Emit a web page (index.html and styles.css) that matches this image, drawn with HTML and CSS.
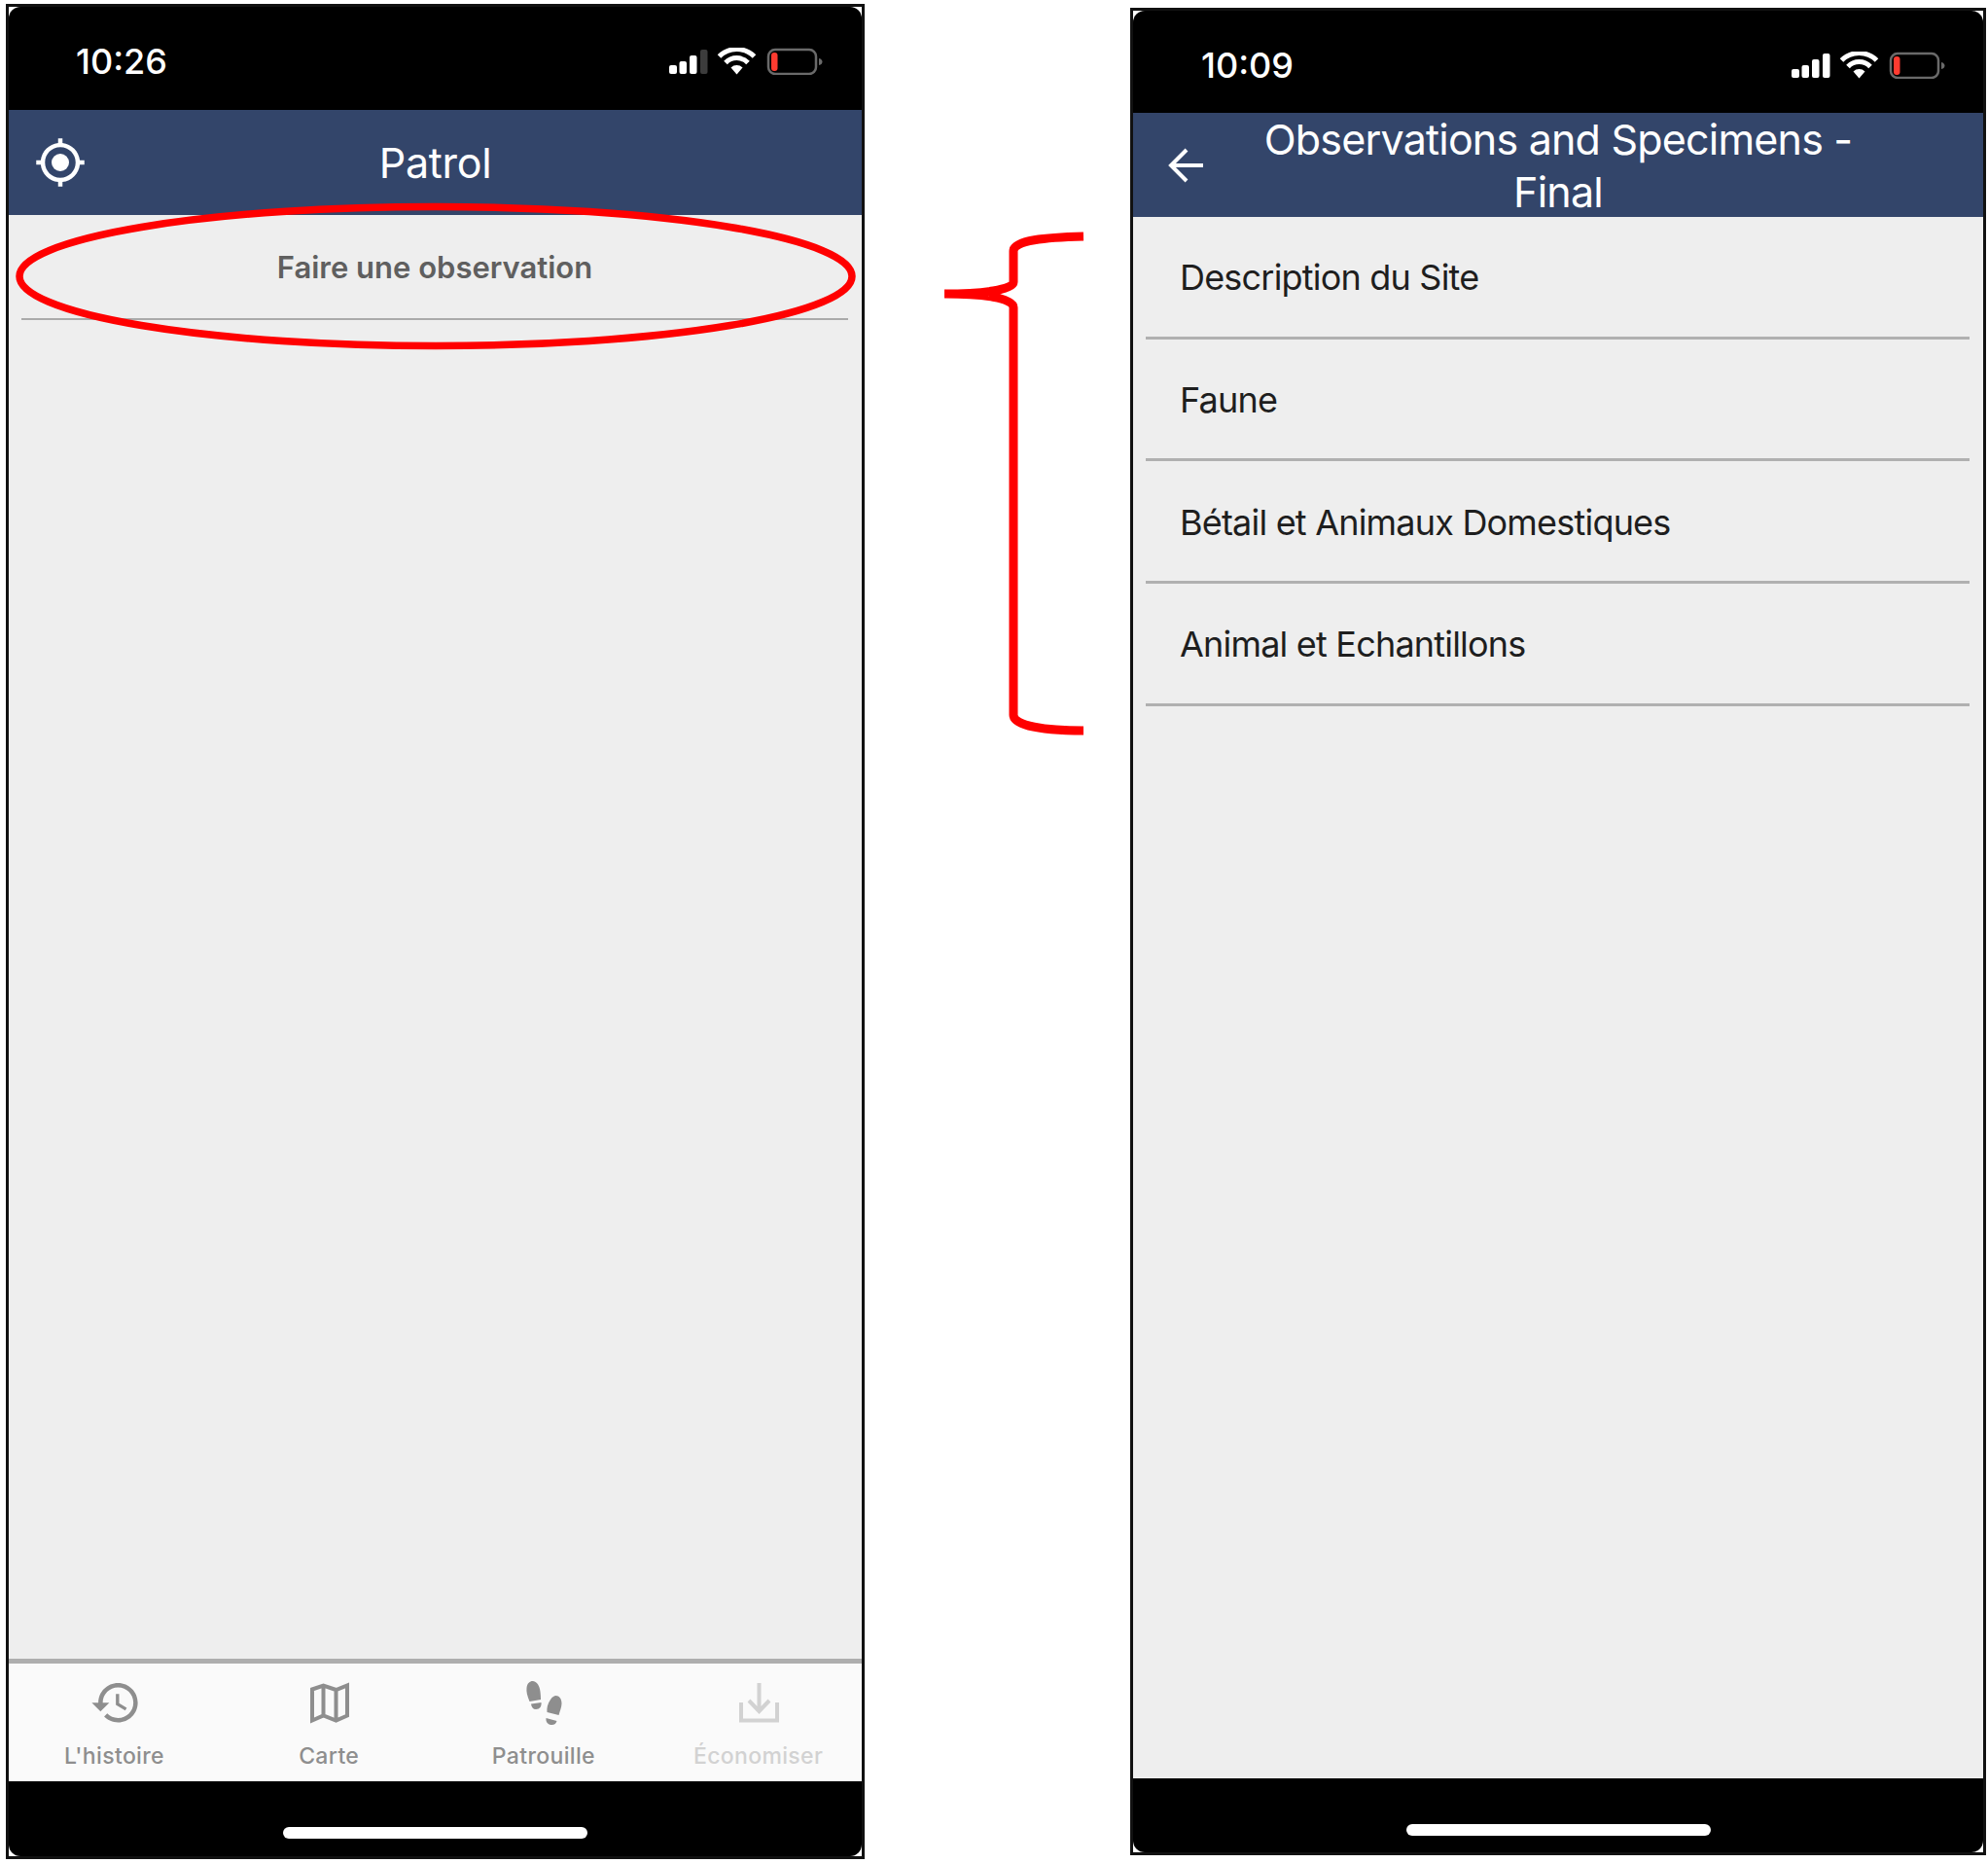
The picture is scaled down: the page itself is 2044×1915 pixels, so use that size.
FILE: index.html
```html
<!DOCTYPE html>
<html lang="fr">
<head>
<meta charset="utf-8">
<title>Patrol</title>
<link rel="stylesheet" href="styles.css">
</head>
<body>
<div class="canvas">
  <section class="phone phone-a">
    <div class="screen">
      <div class="status status-a">
        <span class="time">10:26</span>
        <svg class="status-icons" viewBox="0 0 158 28" width="158" height="28">
          <rect class="w" x="0" y="18" width="8" height="9" rx="2"/>
          <rect class="w" x="10.5" y="14" width="7.5" height="13" rx="2"/>
          <rect class="w" x="21" y="8" width="7.5" height="19" rx="2"/>
          <rect class="dim" x="32" y="2" width="7.5" height="25" rx="2"/>
          <path class="w" d="M69.5 27.5l-6-7a8.5 8.5 0 0 1 12 0z"/>
          <path class="arc" d="M58 15.5a16 16 0 0 1 23 0M51.5 9a25.5 25.5 0 0 1 36 0"/>
          <rect class="batt" x="102" y="2" width="49" height="25" rx="7"/>
          <rect class="red" x="105" y="5" width="6.5" height="19" rx="3"/>
          <path class="nub" d="M154 11c2.500.5 3.500 2 3.500 3.500s-1 3-3.500 3.500z"/>
        </svg>
      </div>
      <header class="bar bar-a">
        <svg class="gps" viewBox="0 0 24 24" width="54" height="54"><path d="M20.940 11c-.46-4.170-3.770-7.480-7.940-7.940V1h-2v2.060C6.830 3.520 3.520 6.830 3.060 11H1v2h2.060c.46 4.170 3.770 7.480 7.940 7.940V23h2v-2.060c4.170-.46 7.480-3.770 7.940-7.940H23v-2h-2.060zM12 19c-3.870 0-7-3.130-7-7s3.130-7 7-7 7 3.130 7 7-3.130 7-7 7z"/><circle cx="12" cy="12" r="4"/></svg>
        <h1 class="title title-short">Patrol</h1>
      </header>
      <main class="content">
        <div class="action">Faire une observation</div>
      </main>
      <nav class="tabs">
        <div class="tab">
          <svg class="tab-icon" viewBox="-0.5 1.7 24 24" width="54" height="54"><path d="M13 3c-4.970 0-9 4.030-9 9H1l3.890 3.890.07.14L9 12H6c0-3.870 3.130-7 7-7s7 3.130 7 7-3.130 7-7 7c-1.930 0-3.680-.79-4.940-2.060l-1.420 1.420C8.270 19.990 10.510 21 13 21c4.970 0 9-4.030 9-9s-4.030-9-9-9zm-1 5v5l4.280 2.540.72-1.210-3.500-2.080V8H12z"/></svg>
          <span class="tab-label">L'histoire</span>
        </div>
        <div class="tab">
          <svg class="tab-icon" viewBox="-8 -3 54 54" width="54" height="54"><path class="map" d="M2 6.500L13.500 2.500L26.500 7L38 2.500V33.500L26.500 38.500L13.500 33.500L2 38.500ZM13.500 2.500V33.500M26.500 7V38.500"/></svg>
          <span class="tab-label">Carte</span>
        </div>
        <div class="tab">
          <svg class="tab-icon" viewBox="0 0 54 54" width="54" height="54">
            <path d="M12.500 22C10 16 9 12 9.500 8C10 3 13 1 15.500 1C20 1 23 6 23.500 12C23.800 15 24 17 24 20Z"/>
            <path d="M14 24.500L24.500 23C25 27 23 30 19 30C16 30 14.500 28 14 24.500Z"/>
            <path d="M30.500 33C30 29 31 24 34 20C36 17 38 16 39.500 16C43 16 45.500 19 45.500 24C45.500 28 43.500 32 42.500 36Z"/>
            <path d="M29.500 39L40.500 42C40 44.500 37.500 46.500 34.500 46C31 45.500 29 43 29.500 39Z"/>
          </svg>
          <span class="tab-label">Patrouille</span>
        </div>
        <div class="tab tab-off">
          <svg class="tab-icon" viewBox="-7 -3 54 54" width="54" height="54"><path class="dl" d="M2 20V38.500H39V20M20.500 0V28M10 18L20.500 29L31 18"/></svg>
          <span class="tab-label">Économiser</span>
        </div>
      </nav>
      <div class="home"><span class="home-bar"></span></div>
    </div>
  </section>

  <section class="phone phone-b">
    <div class="screen">
      <div class="status status-b">
        <span class="time">10:09</span>
        <svg class="status-icons" viewBox="0 0 158 28" width="158" height="28">
          <rect class="w" x="0" y="18" width="8" height="9" rx="2"/>
          <rect class="w" x="10.5" y="14" width="7.5" height="13" rx="2"/>
          <rect class="w" x="21" y="8" width="7.5" height="19" rx="2"/>
          <rect class="w" x="32" y="2" width="7.5" height="25" rx="2"/>
          <path class="w" d="M69.5 27.5l-6-7a8.5 8.5 0 0 1 12 0z"/>
          <path class="arc" d="M58 15.5a16 16 0 0 1 23 0M51.500 9a25.500 25.500 0 0 1 36 0"/>
          <rect class="batt" x="102" y="2" width="49" height="25" rx="7"/>
          <rect class="red" x="105" y="5" width="6.5" height="19" rx="3"/>
          <path class="nub" d="M154 11c2.500.5 3.500 2 3.500 3.500s-1 3-3.500 3.500z"/>
        </svg>
      </div>
      <header class="bar bar-b">
        <svg class="back" viewBox="0 0 38 36" width="38" height="36"><path d="M36 18H3M19 2L3 18L19 34"/></svg>
        <h1 class="title title-wrap">Observations and Specimens - Final</h1>
      </header>
      <main class="content">
        <div class="row">Description du Site</div>
        <div class="row">Faune</div>
        <div class="row">Bétail et Animaux Domestiques</div>
        <div class="row">Animal et Echantillons</div>
      </main>
      <div class="home"><span class="home-bar"></span></div>
    </div>
  </section>

  <svg class="marks" viewBox="0 0 2044 1915" width="2044" height="1915">
    <ellipse cx="448" cy="284" rx="428" ry="71.500"/>
    <path d="M1114 243C1075 244 1042 247 1042 258V290C1042 298 1010 302 971 302C1010 302 1042 306 1042 316V735C1042 746 1075 751 1114 751"/>
  </svg>
</div>
</body>
</html>
```

FILE: styles.css
```css
* { box-sizing: border-box; }

html, body {
  margin: 0;
  padding: 0;
  background: #fff;
}

body {
  font-family: Inter, "Liberation Sans", sans-serif;
}

.canvas {
  position: relative;
  display: flex;
  align-items: flex-start;
  width: 2044px;
  height: 1915px;
  overflow: hidden;
}

.phone {
  flex: none;
  border: 3px solid #111;
  background: #fff;
}

.phone-a {
  width: 883px;
  height: 1907px;
  margin: 4px 0 0 6px;
}

.phone-b {
  width: 880px;
  height: 1899px;
  margin: 8px 0 0 273px;
}

.screen {
  display: flex;
  flex-direction: column;
  height: 100%;
  border-radius: 12px;
  overflow: hidden;
}

.status {
  flex: none;
  display: flex;
  align-items: center;
  background: #000;
  color: #fff;
}

.status-a {
  height: 106px;
  padding: 6px 40px 0 69px;
}

.status-b {
  height: 105px;
  padding: 6px 39px 0 70px;
}

.time {
  font-size: 36px;
  font-weight: 500;
  line-height: 40px;
}

.status-icons {
  display: block;
  margin-left: auto;
}

.w { fill: #fff; }
.dim { fill: #3c3c3c; }
.arc { fill: none; stroke: #fff; stroke-width: 5; }
.batt { fill: none; stroke: #6a6a6a; stroke-width: 2.5; }
.red { fill: #ff3b30; }
.nub { fill: #6a6a6a; }

.bar {
  flex: none;
  display: grid;
  grid-template-columns: 1fr auto 1fr;
  align-items: center;
  background: #33456a;
  color: #fff;
}

.bar-a {
  height: 108px;
  padding: 0 26px;
}

.bar-b {
  height: 107px;
  padding: 0 36px;
}

.title {
  grid-column: 2;
  grid-row: 1;
  margin: 0;
  font-size: 43px;
  font-weight: 400;
  line-height: 54px;
  text-align: center;
}

.title-short {
  letter-spacing: -0.3px;
}

.title-wrap {
  width: 660px;
  letter-spacing: -0.8px;
}

.bar .gps,
.bar .back {
  grid-column: 1;
  grid-row: 1;
}

.gps { fill: #fff; }

.back path {
  fill: none;
  stroke: #fff;
  stroke-width: 4;
}

.content {
  flex: 1;
  background: #eee;
}

.action {
  display: flex;
  align-items: center;
  justify-content: center;
  height: 108px;
  margin: 0 14px 0 13px;
  border-bottom: 2px solid #aaa;
  color: #5f5f5f;
  font-size: 31px;
  font-weight: 600;
}

.row {
  display: flex;
  align-items: center;
  height: 125.700px;
  margin: 0 14px 0 13px;
  padding: 2px 0 0 35px;
  border-bottom: 3px solid #b0b0b0;
  color: #1e1e1e;
  font-size: 36px;
  letter-spacing: -0.8px;
}

.tabs {
  flex: none;
  display: grid;
  grid-template-columns: repeat(4, 216px);
  column-gap: 4.700px;
  height: 126px;
  padding: 17px 0 0 0.500px;
  border-top: 5px solid #aeaeae;
  background: #fafafa;
}

.tab {
  display: flex;
  flex-direction: column;
  align-items: center;
  color: #8e8e8e;
  fill: #8e8e8e;
}

.tab-off {
  color: #d2d2d2;
  fill: #d2d2d2;
}

.tab-icon {
  display: block;
}

.map {
  fill: none;
  stroke: #8e8e8e;
  stroke-width: 4;
}

.dl {
  fill: none;
  stroke: #d2d2d2;
  stroke-width: 4;
}

.tab-label {
  margin-top: 10px;
  font-size: 23px;
  line-height: 28px;
  font-weight: 500;
  letter-spacing: 0.35px;
}

.home {
  flex: none;
  display: flex;
  justify-content: center;
  align-items: flex-start;
  padding-top: 47px;
  background: #000;
}

.phone-a .home {
  height: 77px;
}

.phone-b .home {
  height: 76px;
}

.home-bar {
  display: block;
  width: 313px;
  height: 12px;
  border-radius: 6px;
  background: #fff;
}

.marks {
  position: absolute;
  top: 0;
  left: 0;
  pointer-events: none;
  fill: none;
  stroke: #ff0000;
}

.marks ellipse { stroke-width: 7.500; }
.marks path { stroke-width: 9; }
```
